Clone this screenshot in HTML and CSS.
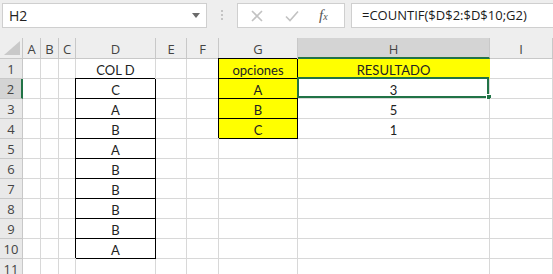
FILE: index.html
```html
<!DOCTYPE html>
<html>
	<head>
		<title>COUNTIF</title>
		<meta charset="utf-8" />
		<link rel="stylesheet" href="styles.css">
	</head>
	<body>
		<div class="formula-bar">
			<div class="name-box">
				<span>H2</span>
				<svg class="caret" width="8" height="5" viewBox="0 0 8 5"><polygon points="0,0 8,0 4,5" fill="#6b6b6b"/></svg>
			</div>
			<div class="grip">
				<svg width="3" height="11" viewBox="0 0 3 11"><rect x="0" y="0" width="2" height="2" fill="#c4c4c4"/><rect x="0" y="4" width="2" height="2" fill="#c4c4c4"/><rect x="0" y="8" width="2" height="2" fill="#c4c4c4"/></svg>
			</div>
			<div class="actions">
				<svg width="16" height="16" viewBox="0 0 16 16"><path d="M3 3 L13 13 M13 3 L3 13" stroke="#c2c2c2" stroke-width="1.6" fill="none"/></svg>
				<svg width="16" height="16" viewBox="0 0 16 16"><path d="M2 8.5 L6 12.5 L14 3.5" stroke="#c2c2c2" stroke-width="1.6" fill="none"/></svg>
				<span class="fx">f<sub>x</sub></span>
			</div>
			<div class="formula">=COUNTIF($D$2:$D$10;G2)</div>
		</div>

		<div class="sheet">
			<!-- column headers -->
			<div class="cell corner"><svg width="16" height="14" viewBox="0 0 16 14"><polygon points="16,0 16,14 0,14" fill="#c9c9c9"/></svg></div>
			<div class="cell ch">A</div><div class="cell ch">B</div><div class="cell ch">C</div><div class="cell ch">D</div><div class="cell ch">E</div><div class="cell ch">F</div><div class="cell ch">G</div><div class="cell ch active-col">H</div><div class="cell ch">I</div>

			<div class="cell rh">1</div><div class="cell"></div><div class="cell"></div><div class="cell"></div><div class="cell">COL D</div><div class="cell"></div><div class="cell"></div><div class="cell y box">opciones</div><div class="cell y y-end">RESULTADO</div><div class="cell"></div>
			<div class="cell rh active-row">2</div><div class="cell"></div><div class="cell"></div><div class="cell"></div><div class="cell box">C</div><div class="cell"></div><div class="cell"></div><div class="cell y box">A</div><div class="cell selected">3<div class="sel"></div><div class="handle"></div></div><div class="cell"></div>
			<div class="cell rh">3</div><div class="cell"></div><div class="cell"></div><div class="cell"></div><div class="cell box">A</div><div class="cell"></div><div class="cell"></div><div class="cell y box">B</div><div class="cell">5</div><div class="cell"></div>
			<div class="cell rh">4</div><div class="cell"></div><div class="cell"></div><div class="cell"></div><div class="cell box">B</div><div class="cell"></div><div class="cell"></div><div class="cell y box">C</div><div class="cell">1</div><div class="cell"></div>
			<div class="cell rh">5</div><div class="cell"></div><div class="cell"></div><div class="cell"></div><div class="cell box">A</div><div class="cell"></div><div class="cell"></div><div class="cell"></div><div class="cell"></div><div class="cell"></div>
			<div class="cell rh">6</div><div class="cell"></div><div class="cell"></div><div class="cell"></div><div class="cell box">B</div><div class="cell"></div><div class="cell"></div><div class="cell"></div><div class="cell"></div><div class="cell"></div>
			<div class="cell rh">7</div><div class="cell"></div><div class="cell"></div><div class="cell"></div><div class="cell box">B</div><div class="cell"></div><div class="cell"></div><div class="cell"></div><div class="cell"></div><div class="cell"></div>
			<div class="cell rh">8</div><div class="cell"></div><div class="cell"></div><div class="cell"></div><div class="cell box">B</div><div class="cell"></div><div class="cell"></div><div class="cell"></div><div class="cell"></div><div class="cell"></div>
			<div class="cell rh">9</div><div class="cell"></div><div class="cell"></div><div class="cell"></div><div class="cell box">B</div><div class="cell"></div><div class="cell"></div><div class="cell"></div><div class="cell"></div><div class="cell"></div>
			<div class="cell rh">10</div><div class="cell"></div><div class="cell"></div><div class="cell"></div><div class="cell box">A</div><div class="cell"></div><div class="cell"></div><div class="cell"></div><div class="cell"></div><div class="cell"></div>
			<div class="cell rh">11</div><div class="cell"></div><div class="cell"></div><div class="cell"></div><div class="cell"></div><div class="cell"></div><div class="cell"></div><div class="cell"></div><div class="cell"></div><div class="cell"></div>
		</div>
	</body>
</html>
```

FILE: styles.css
```css
* {
	padding: 0;
	margin: 0;
	box-sizing: border-box;
}

body {
	width: 553px;
	height: 274px;
	overflow: hidden;
	background: #ffffff;
	font-family: "Open Sans", sans-serif;
	color: #222;
}

/* formula bar */
.formula-bar {
	height: 38px;
	background: #eeeeee;
	padding: 3px 0 0 2px;
	display: flex;
	align-items: flex-start;
}

.name-box,
.actions,
.formula {
	height: 25px;
	background: #ffffff;
	border: 1px solid #cfcfcf;
}

.name-box {
	width: 205px;
	display: flex;
	align-items: center;
	justify-content: space-between;
	padding: 0 6px 0 6px;
	font-size: 14px;
}

.grip {
	width: 30px;
	height: 25px;
	display: flex;
	align-items: center;
	justify-content: center;
}

.actions {
	width: 108px;
	display: flex;
	align-items: center;
	gap: 19px;
	padding-left: 11px;
}

.fx {
	width: 16px;
	font-family: "Liberation Serif", serif;
	font-style: italic;
	font-size: 15px;
	color: #555;
	line-height: 1;
}

.fx sub {
	font-size: 10px;
	vertical-align: 0;
}

.formula {
	flex: 1;
	margin-left: 6px;
	margin-right: -2px;
	padding-left: 10px;
	font-size: 13px;
	line-height: 23px;
	color: #1a1a1a;
}

/* sheet grid */
.sheet {
	display: grid;
	grid-template-columns: 23px 18px 18px 17px 80px 31px 32px 79px 192px 63px;
	grid-template-rows: 21px repeat(11, 20px);
	font-family: "Lato", sans-serif;
	font-size: 13px;
}

.cell {
	position: relative;
	border-right: 1px solid #d8d8d8;
	border-bottom: 1px solid #d8d8d8;
	text-align: center;
	line-height: 17px;
	padding-top: 3px;
	white-space: nowrap;
	color: #222;
}

.ch,
.rh,
.corner {
	background: #eeeeee;
	border-color: #c8c8c8;
	font-family: "Open Sans", sans-serif;
	font-size: 13px;
	color: #444;
}

.ch {
	padding-top: 3px;
}

.rh {
	background: #e9e9e9;
	padding-top: 2px;
}

.corner {
	display: flex;
	align-items: flex-end;
	justify-content: flex-end;
	padding: 0 2px 3px 0;
}

.active-col {
	background: #d4d4d4;
	border-bottom: 2px solid #217346;
}

.active-row {
	background: #d4d4d4;
	border-right: 2px solid #217346;
}

.y {
	background: #ffff00;
}

.y-end {
	border-right-color: #ffff00;
}

.box {
	border-right-color: #000;
	border-bottom-color: #000;
	box-shadow: -1px -1px 0 #000;
}

/* selection of H2 */
.sel {
	position: absolute;
	left: -1px;
	top: -2px;
	right: 0;
	bottom: 0;
	border: 2px solid #217346;
}

.handle {
	position: absolute;
	right: -3px;
	bottom: -2px;
	width: 6px;
	height: 6px;
	background: #217346;
	border: 1px solid #ffffff;
}
```
